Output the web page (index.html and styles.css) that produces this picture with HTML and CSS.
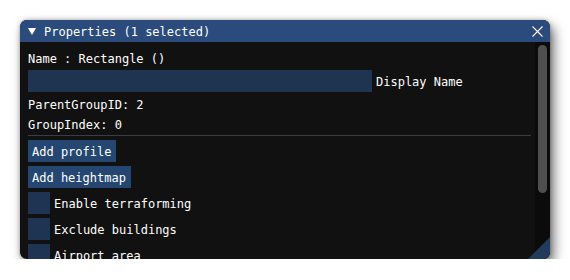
FILE: index.html
```html
<!DOCTYPE html>
<html>
<head>
<meta charset="utf-8">
<link rel="stylesheet" href="styles.css">
</head>
<body>
<div class="window">
  <div class="titlebar">
    <svg class="collapse" width="8" height="7" viewBox="0 0 8 7"><path d="M0 0H8L4 7Z" fill="#fff"/></svg>
    <span class="title">Properties (1 selected)</span>
    <svg class="close" width="11" height="11" viewBox="0 0 11 11"><path d="M0.5 0.5L10.5 10.5M10.5 0.5L0.5 10.5" stroke="#fff" stroke-width="1.1"/></svg>
  </div>
  <div class="body">
    <div class="content">
      <div class="text">Name : Rectangle ()</div>
      <div class="field-row"><div class="input"></div><span class="frame-label">Display Name</span></div>
      <div class="text">ParentGroupID: 2</div>
      <div class="text">GroupIndex: 0</div>
      <div class="separator"></div>
      <div class="button">Add profile</div>
      <div class="button">Add heightmap</div>
      <div class="check"><span class="box"></span><span class="frame-label">Enable terraforming</span></div>
      <div class="check"><span class="box"></span><span class="frame-label">Exclude buildings</span></div>
      <div class="check"><span class="box"></span><span class="frame-label">Airport area</span></div>
    </div>
    <div class="scrollbar"><div class="grab"></div></div>
  </div>
  <div class="grip"></div>
</div>
</body>
</html>
```
FILE: styles.css
```css
html, body {
  margin: 0;
  background: #ffffff;
}
body {
  padding: 20px 0 0 20px;
  font-family: "DejaVu Sans Mono", "Liberation Mono", monospace;
  font-size: 12px;
  color: #ffffff;
}
.window {
  position: relative;
  width: 530px;
  height: 239px;
  background: #111111;
  border-radius: 7px;
  overflow: hidden;
  display: flex;
  flex-direction: column;
  box-shadow: 4px 6px 12px rgba(0,0,0,0.55), 0 0 4px rgba(0,0,0,0.3);
}
.titlebar {
  height: 22px;
  flex: none;
  background: #2a4b7b;
  display: flex;
  align-items: center;
  padding: 0 7px 0 8px;
  box-sizing: border-box;
}
.collapse {
  flex: none;
  margin-top: 1px;
}
.title {
  flex: 1;
  margin-left: 8px;
  height: 22px;
  box-sizing: border-box;
  padding-top: 2px;
  line-height: 20px;
  white-space: pre;
}
.close {
  flex: none;
  margin-top: 1px;
}
.body {
  flex: 1;
  display: flex;
  min-height: 0;
}
.content {
  flex: 1;
  min-width: 0;
  padding: 8px 4px 0 8px;
  display: flex;
  flex-direction: column;
  gap: 4px;
  overflow: hidden;
}
.text {
  flex: none;
  height: 16px;
  box-sizing: border-box;
  padding-top: 2px;
  line-height: 14px;
  white-space: pre;
}
.field-row, .check {
  flex: none;
  display: flex;
  gap: 4px;
  height: 22px;
}
.input {
  width: 344px;
  height: 22px;
  background: #1f3451;
}
.frame-label, .button {
  height: 22px;
  box-sizing: border-box;
  padding-top: 2px;
  line-height: 20px;
  white-space: pre;
}
.separator {
  flex: none;
  height: 1px;
  margin-top: -1px;
  background: #3c3c45;
}
.button {
  flex: none;
  align-self: flex-start;
  padding-left: 4px;
  padding-right: 5px;
  background: #244670;
}
.box {
  width: 22px;
  height: 22px;
  background: #1f3352;
}
.scrollbar {
  flex: none;
  width: 15px;
  background: #0b0b0b;
  padding: 3px 0 0 3px;
  box-sizing: border-box;
}
.grab {
  width: 9px;
  height: 148px;
  border-radius: 5px;
  background: #4f4f4f;
}
.grip {
  position: absolute;
  right: 0;
  bottom: 0;
  width: 22px;
  height: 22px;
  background: #213b5d;
  clip-path: polygon(100% 0, 100% 100%, 0 100%);
}
```
